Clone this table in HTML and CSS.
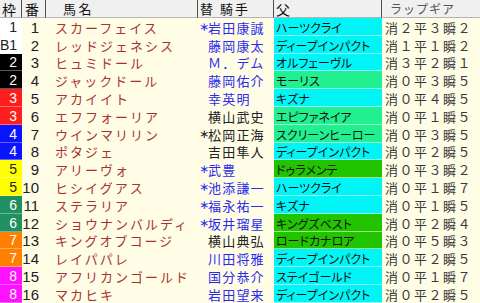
FILE: index.html
```html
<!DOCTYPE html>
<html lang="ja">
<head>
<meta charset="utf-8">
<title>出走表</title>
<link rel="stylesheet" href="styles.css">
</head>
<body>
<div class="sheet">
  <div class="hd c-waku">枠</div>
  <div class="hd c-ban">番</div>
  <div class="hd c-name">馬名</div>
  <div class="hd c-jockey">替&nbsp;騎手</div>
  <div class="hd c-sire">父</div>
  <div class="hd c-lap">ラップギア</div>

  <div class="waku w1">1</div><div class="ban">1</div><div class="name">スカーフェイス</div><div class="jockey blue"><span class="mk">∗</span>岩田康誠</div><div class="sire s-cy">ハーツクライ</div><div class="lap">消２平３瞬２</div>
  <div class="waku w1">B1</div><div class="ban">2</div><div class="name">レッドジェネシス</div><div class="jockey blue"><span class="mk"></span>藤岡康太</div><div class="sire s-cy">ディープインパクト</div><div class="lap">消１平１瞬２</div>
  <div class="waku w2">2</div><div class="ban">3</div><div class="name">ヒュミドール</div><div class="jockey blue"><span class="mk"></span>Ｍ．デム</div><div class="sire s-cy">オルフェーヴル</div><div class="lap">消３平２瞬１</div>
  <div class="waku w2">2</div><div class="ban">4</div><div class="name">ジャックドール</div><div class="jockey blue"><span class="mk"></span>藤岡佑介</div><div class="sire s-sg">モーリス</div><div class="lap">消０平３瞬５</div>
  <div class="waku w3">3</div><div class="ban">5</div><div class="name">アカイイト</div><div class="jockey blue"><span class="mk"></span>幸英明</div><div class="sire s-cy">キズナ</div><div class="lap">消０平４瞬５</div>
  <div class="waku w3">3</div><div class="ban">6</div><div class="name">エフフォーリア</div><div class="jockey"><span class="mk"></span>横山武史</div><div class="sire s-sg">エピファネイア</div><div class="lap">消０平１瞬５</div>
  <div class="waku w4">4</div><div class="ban">7</div><div class="name">ウインマリリン</div><div class="jockey"><span class="mk">∗</span>松岡正海</div><div class="sire s-sg">スクリーンヒーロー</div><div class="lap">消０平３瞬５</div>
  <div class="waku w4">4</div><div class="ban">8</div><div class="name">ポタジェ</div><div class="jockey"><span class="mk"></span>吉田隼人</div><div class="sire s-cy">ディープインパクト</div><div class="lap">消０平２瞬５</div>
  <div class="waku w5">5</div><div class="ban">9</div><div class="name">アリーヴォ</div><div class="jockey blue"><span class="mk">∗</span>武豊</div><div class="sire s-gr">ドゥラメンテ</div><div class="lap">消０平３瞬２</div>
  <div class="waku w5">5</div><div class="ban">10</div><div class="name">ヒシイグアス</div><div class="jockey blue"><span class="mk">∗</span>池添謙一</div><div class="sire s-cy">ハーツクライ</div><div class="lap">消０平１瞬７</div>
  <div class="waku w6">6</div><div class="ban">11</div><div class="name">ステラリア</div><div class="jockey blue"><span class="mk">∗</span>福永祐一</div><div class="sire s-cy">キズナ</div><div class="lap">消０平１瞬５</div>
  <div class="waku w6">6</div><div class="ban">12</div><div class="name">ショウナンバルディ</div><div class="jockey blue"><span class="mk">∗</span>坂井瑠星</div><div class="sire s-gr">キングズベスト</div><div class="lap">消０平２瞬４</div>
  <div class="waku w7">7</div><div class="ban">13</div><div class="name">キングオブコージ</div><div class="jockey"><span class="mk"></span>横山典弘</div><div class="sire s-gr">ロードカナロア</div><div class="lap">消０平５瞬３</div>
  <div class="waku w7">7</div><div class="ban">14</div><div class="name">レイパパレ</div><div class="jockey blue"><span class="mk"></span>川田将雅</div><div class="sire s-cy">ディープインパクト</div><div class="lap">消０平２瞬５</div>
  <div class="waku w8">8</div><div class="ban">15</div><div class="name">アフリカンゴールド</div><div class="jockey blue"><span class="mk"></span>国分恭介</div><div class="sire s-cy">ステイゴールド</div><div class="lap">消０平１瞬７</div>
  <div class="waku w8">8</div><div class="ban">16</div><div class="name">マカヒキ</div><div class="jockey blue"><span class="mk"></span>岩田望来</div><div class="sire s-cy">ディープインパクト</div><div class="lap">消０平２瞬５</div>
</div>
</body>
</html>
```

FILE: styles.css
```css
html, body {
  margin: 0;
  padding: 0;
  background: #fffde6;
}

body {
  width: 480px;
  height: 303px;
  overflow: hidden;
  font-family: "Noto Sans CJK JP", "Noto Sans", sans-serif;
}

.sheet {
  display: grid;
  grid-template-columns: 22px 24px 152px 76px 108px 98px;
  grid-template-rows: 18px repeat(16, 17.8px);
  background: #fffde6;
}

.sheet > div {
  display: flex;
  align-items: center;
  white-space: nowrap;
  line-height: 15px;
  min-width: 0;
  padding-top: 1px;
}

.sheet > .hd {
  background: #f0f0f0;
  border-bottom: 1px solid #b4b4b4;
  border-right: 1px solid #505050;
  font-size: 14px;
  line-height: 14px;
  padding-top: 0;
  color: #111;
}

.hd.c-waku { padding-left: 2px; }
.hd.c-ban { padding-left: 3px; }
.hd.c-name { padding-left: 17px; font-size: 13px; letter-spacing: 2.5px; }
.hd.c-jockey { padding-left: 2px; font-size: 13px; letter-spacing: 2px; }
.hd.c-sire { padding-left: 2px; }
.hd.c-lap {
  border-right: none;
  padding-left: 8px;
  font-size: 12px;
  color: #555;
  letter-spacing: 1px;
}

.waku {
  justify-content: flex-end;
  padding-right: 5px;
  font-family: "Liberation Sans", "DejaVu Sans", sans-serif;
  font-size: 14px;
  color: #fff;
  box-shadow: inset 0 -1px 0 rgba(255, 255, 255, 0.35);
}
.w1 { background: #ffffff; color: #222; box-shadow: none; }
.w2 { background: #000000; }
.w3 { background: #ff1e1e; }
.w4 { background: #0a14ff; }
.w5 { background: #ffff00; color: #222; }
.w6 { background: #1f9060; }
.w7 { background: #ff8000; }
.w8 { background: #ff10ff; }

.ban {
  justify-content: flex-end;
  padding-right: 7px;
  font-family: "Liberation Sans", "DejaVu Sans", sans-serif;
  font-size: 15px;
  color: #222;
}

.name {
  padding-left: 9px;
  font-size: 13px;
  letter-spacing: 2px;
  color: #a83232;
}

.jockey {
  padding-left: 1px;
  font-size: 13px;
  letter-spacing: 1.2px;
  color: #222;
}
.jockey.blue { color: #2b2bf0; }
.mk {
  display: inline-block;
  width: 9px;
  font-family: "DejaVu Sans", sans-serif;
  font-size: 12px;
  letter-spacing: 0;
}

.sire {
  padding-left: 2px;
  font-size: 12px;
  font-feature-settings: "palt";
  color: #111;
  box-shadow: inset 0 -1px 0 rgba(255, 255, 255, 0.55);
}
.s-cy { background: #00f6f6; }
.s-sg { background: #20f090; }
.s-gr { background: #22c400; }

.lap {
  padding-left: 3px;
  font-size: 13px;
  letter-spacing: 1.5px;
  color: #3a3a3a;
}
```
